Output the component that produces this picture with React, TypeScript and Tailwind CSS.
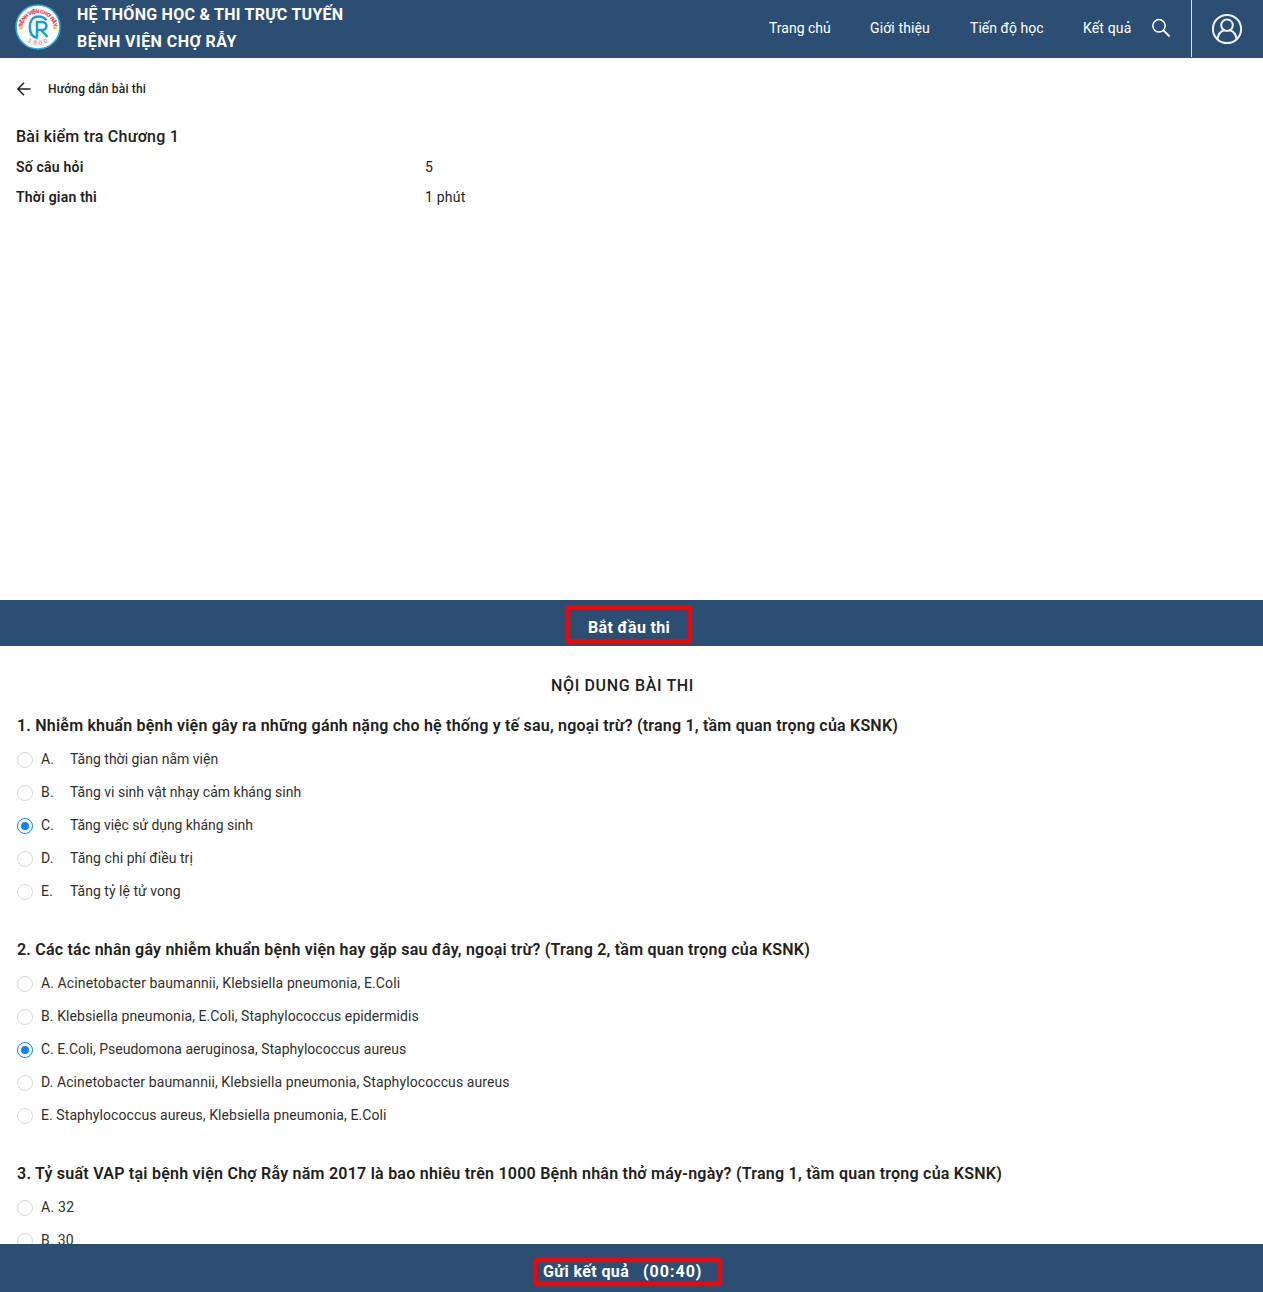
type Option = { label?: string; text: string; tracking: string };
type Question = { title: string; tracking: string; selected: number; options: Option[] };

const nav = [
  { text: 'Trang chủ', cls: 'w-[101px] tracking-[0px]' },
  { text: 'Giới thiệu', cls: 'w-[100px] tracking-[0.13px]' },
  { text: 'Tiến độ học', cls: 'w-[113px] tracking-[0.03px]' },
  { text: 'Kết quả', cls: 'w-[68px] tracking-[0.15px]' },
];

const questions: Question[] = [
  {
    title: '1. Nhiễm khuẩn bệnh viện gây ra những gánh nặng cho hệ thống y tế sau, ngoại trừ? (trang 1, tầm quan trọng của KSNK)',
    tracking: 'tracking-[0.208px]',
    selected: 2,
    options: [
      { label: 'A.', text: 'Tăng thời gian nằm viện', tracking: 'tracking-[0.01px]' },
      { label: 'B.', text: 'Tăng vi sinh vật nhạy cảm kháng sinh', tracking: 'tracking-[0px]' },
      { label: 'C.', text: 'Tăng việc sử dụng kháng sinh', tracking: 'tracking-[-0.05px]' },
      { label: 'D.', text: 'Tăng chi phí điều trị', tracking: 'tracking-[0.05px]' },
      { label: 'E.', text: 'Tăng tỷ lệ tử vong', tracking: 'tracking-[0.02px]' },
    ],
  },
  {
    title: '2. Các tác nhân gây nhiễm khuẩn bệnh viện hay gặp sau đây, ngoại trừ? (Trang 2, tầm quan trọng của KSNK)',
    tracking: 'tracking-[0.212px]',
    selected: 2,
    options: [
      { text: 'A. Acinetobacter baumannii, Klebsiella pneumonia, E.Coli', tracking: 'tracking-[0.105px]' },
      { text: 'B. Klebsiella pneumonia, E.Coli, Staphylococcus epidermidis', tracking: 'tracking-[0.09px]' },
      { text: 'C. E.Coli, Pseudomona aeruginosa, Staphylococcus aureus', tracking: 'tracking-[0.012px]' },
      { text: 'D. Acinetobacter baumannii, Klebsiella pneumonia, Staphylococcus aureus', tracking: 'tracking-[0.095px]' },
      { text: 'E. Staphylococcus aureus, Klebsiella pneumonia, E.Coli', tracking: 'tracking-[0.08px]' },
    ],
  },
  {
    title: '3. Tỷ suất VAP tại bệnh viện Chợ Rẫy năm 2017 là bao nhiêu trên 1000 Bệnh nhân thở máy-ngày? (Trang 1, tầm quan trọng của KSNK)',
    tracking: 'tracking-[0.24px]',
    selected: -1,
    options: [
      { text: 'A. 32', tracking: 'tracking-[0.25px]' },
      { text: 'B. 30', tracking: 'tracking-[0.25px]' },
    ],
  },
];

function Logo() {
  return (
    <svg className="size-[46px] shrink-0" viewBox="0 0 46 46" fontFamily="Liberation Sans, sans-serif" fontWeight="700">
      <defs>
        <path id="topArc" d="M7 25A16 16 0 0 1 39 25" />
        <path id="bottomArc" d="M5 23A18 18 0 0 0 41 23" />
      </defs>
      <circle cx="23" cy="23" r="22" fill="#fff" stroke="#25abe3" strokeWidth="1.6" />
      <text fontSize="5" fill="#e8323c" stroke="#e8323c" strokeWidth="0.2">
        <textPath href="#topArc" startOffset="50%" textAnchor="middle" textLength="46">BỆNH VIỆN CHỢ RẪY</textPath>
      </text>
      <text fontSize="6.5" fill="#f08a8e" letterSpacing="2.6">
        <textPath href="#bottomArc" startOffset="52%" textAnchor="middle">1900</textPath>
      </text>
      <g fill="none" stroke="#149fda" strokeWidth="2.5">
        <path d="M31.5 16.4C29.6 13.4 26.6 12.4 23.4 12.4C17.8 12.4 14.8 17 14.8 22.8C14.8 29 17.6 33.4 22.8 34" />
        <path d="M22 33V18H27C33 18 33 26 27 26H22M26 26L32.5 32.8" />
      </g>
      <path d="M6 20.8l.8 1.8 2 .2-1.5 1.3.5 2-1.8-1.1-1.8 1.1.5-2-1.5-1.3 2-.2zM40 20.8l.8 1.8 2 .2-1.5 1.3.5 2-1.8-1.1-1.8 1.1.5-2-1.5-1.3 2-.2z" fill="#f9c440" />
    </svg>
  );
}

function Radio({ checked }: { checked: boolean }) {
  return (
    <span
      className={
        'mt-2 flex size-4 shrink-0 items-center justify-center rounded-full border bg-white ' +
        (checked ? 'border-[#1088ff]' : 'border-[#d9d9d9]')
      }
    >
      {checked && <span className="size-[8.6px] rounded-full bg-[#0a84ff]" />}
    </span>
  );
}

export default function App() {
  return (
    <div className="flex h-[1292px] w-full flex-col overflow-hidden bg-white font-['Roboto',sans-serif] text-[#212121]">
      <header className="flex h-[58px] shrink-0 bg-[#2c4e73] text-white">
        <div className="flex flex-1 pl-[15px]">
          <div className="pt-1">
            <Logo />
          </div>
          <div className="ml-4 pt-px text-[16px] leading-[27px] font-bold whitespace-nowrap">
            <div className="tracking-[0.26px]">HỆ THỐNG HỌC &amp; THI TRỰC TUYẾN</div>
            <div className="tracking-[0.46px]">BỆNH VIỆN CHỢ RẪY</div>
          </div>
        </div>
        <nav className="flex text-[14px] leading-[57px] whitespace-nowrap">
          {nav.map((n) => (
            <a key={n.text} className={n.cls}>{n.text}</a>
          ))}
        </nav>
        <div className="flex h-[57px] w-[41px] border-r border-[#dfe5eb] pt-[18px]">
          <svg className="size-5" viewBox="0 0 20 20" fill="none" stroke="#fff" strokeWidth="1.5">
            <circle cx="8" cy="7.8" r="6.2" />
            <path d="M12.4 12.3L18.6 18.5" strokeWidth="1.8" />
          </svg>
        </div>
        <div className="w-[71px] pt-[13px] pl-[19px]">
          <svg className="size-8" viewBox="0 0 32 32" fill="none" stroke="#eef3f8" strokeWidth="2">
            <circle cx="16" cy="16" r="14.1" />
            <circle cx="16" cy="12.2" r="5.8" />
            <path d="M6.4 26.2C7.2 21 10.2 18 13 17.2M19 17.2C21.8 18 24.8 21 25.6 26.2" />
          </svg>
        </div>
      </header>

      <section className="flex h-[542px] shrink-0 flex-col pt-5 pl-4">
        <div className="flex h-[22px] items-center">
          <svg className="mr-4 size-4" viewBox="0 0 16 16" fill="none" stroke="#212121" strokeWidth="1.5">
            <path d="M14.6 8H2.2M8 1.8L1.9 8L8 14.2" />
          </svg>
          <span className="text-[12px] leading-[22px] font-medium tracking-[0.17px]">Hướng dẫn bài thi</span>
        </div>
        <h1 className="mt-[21px] text-[16px] leading-[31px] font-medium tracking-[0.22px]">Bài kiểm tra Chương 1</h1>
        <dl className="grid grid-cols-[409px_1fr] text-[14px] leading-[30px]">
          <dt className="font-semibold tracking-[0.21px]">Số câu hỏi</dt>
          <dd>5</dd>
          <dt className="font-semibold tracking-[0.21px]">Thời gian thi</dt>
          <dd className="tracking-[0.2px]">1 phút</dd>
        </dl>
      </section>

      <div className="flex h-[46px] shrink-0 bg-[#2c4e73] pt-[5px] pl-[565px]">
        <button className="flex h-[38px] w-[127px] rounded-[3px] border-4 border-[#ff0000] pt-[4px] pl-[19px] text-[16px] leading-[29px] font-bold tracking-[0.35px] whitespace-nowrap text-white">
          Bắt đầu thi
        </button>
      </div>

      <main className="min-h-0 flex-1 overflow-hidden pl-[17px]">
        <h2 className="mt-6 mb-[8px] pr-[35px] text-center text-[16px] leading-[31px] font-medium tracking-[0.66px]">NỘI DUNG BÀI THI</h2>
        {questions.map((q) => (
          <section key={q.title} className="mb-6">
            <h3 className={'h-[35px] text-[16px] leading-[33px] font-semibold whitespace-nowrap ' + q.tracking}>{q.title}</h3>
            {q.options.map((o, i) => (
              <div key={o.text} className="flex h-[33px] text-[14px] leading-[30px] text-[#2f2f2f]">
                <Radio checked={i === q.selected} />
                <span className="ml-2 flex">
                  {o.label && <span className="w-[29px] tracking-[0.2px]">{o.label}</span>}
                  <span className={o.tracking}>{o.text}</span>
                </span>
              </div>
            ))}
          </section>
        ))}
      </main>

      <footer className="flex h-12 shrink-0 bg-[#2c4e73] pt-[14px] pl-[533px]">
        <button className="flex h-7 w-[189px] rounded-[3px] border-4 border-[#ff0000] pl-[6px] text-[16px] leading-[19px] font-bold whitespace-nowrap text-white">
          <span className="w-[100px] text-left tracking-[0.4px]">Gửi kết quả</span>
          <span className="tracking-[1px]">(00:40)</span>
        </button>
      </footer>
    </div>
  );
}
